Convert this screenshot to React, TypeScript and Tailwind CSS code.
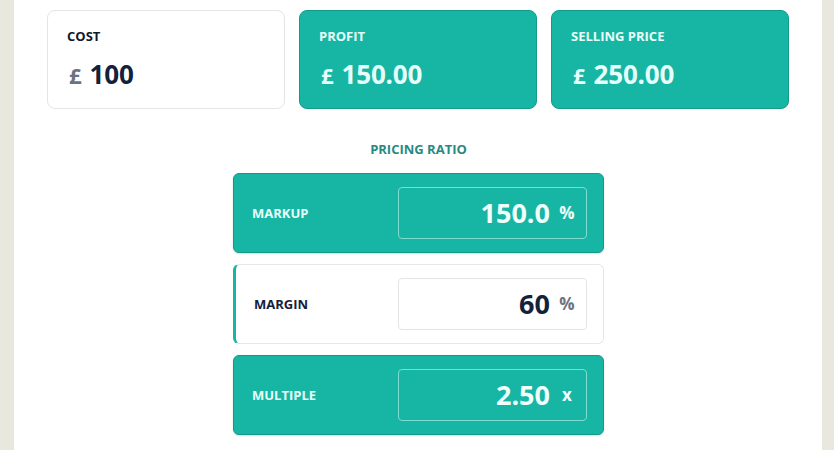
import React from "react";

const font = { fontFamily: '"Open Sans", "Liberation Sans", sans-serif' };

function Card({ label, value, active }: { label: string; value: string; active?: boolean }) {
  return (
    <div
      className={
        "w-[238px] h-[99px] rounded-[8px] border px-[19px] pt-[15px] " +
        (active ? "bg-[#17b5a4] border-[#139a8b]" : "bg-white border-[#e3e5e8]")
      }
    >
      <div className={"text-[13px] font-bold leading-[20px] " + (active ? "text-[#e6fffb]" : "text-[#111827]")}>{label}</div>
      <div className="mt-[12px] flex items-baseline gap-[8px] leading-[32px] pl-[2px]">
        <span className={"text-[22px] font-bold " + (active ? "text-[#e6fffb]" : "text-[#6b7280]")}>£</span>
        <span className={"text-[26px] font-bold tracking-[-0.2px] " + (active ? "text-[#e6fffb]" : "text-[#14213d]")}>{value}</span>
      </div>
    </div>
  );
}

function Row({ label, value, unit, active }: { label: string; value: string; unit: string; active?: boolean }) {
  return (
    <div
      className={
        "w-[371px] h-[80px] rounded-[6px] flex items-center justify-between pl-[18px] pr-[16px] " +
        (active
          ? "bg-[#17b5a4] border border-[#139a8b] shadow-[0_1px_2px_rgba(0,0,0,0.15)]"
          : "bg-white border border-[#e5e7eb] border-l-[3px] border-l-[#17b5a4]")
      }
    >
      <div className={"text-[13px] font-bold pt-[2px] " + (active ? "text-[#e6fffb]" : "text-[#14213d]")}>{label}</div>
      <div
        className={
          "w-[189px] h-[52px] rounded-[4px] border flex items-center justify-end pr-[11px] gap-[9px] " +
          (active ? "border-[#7fdcd0]" : "border-[#e3e5e8] bg-white")
        }
      >
        <span className={"text-[27px] font-bold leading-[34px] " + (active ? "text-[#f0fffc]" : "text-[#14213d]")}>{value}</span>
        <span
          className={
            "text-[17px] font-bold w-[16px] text-center " + (active ? "text-[#f0fffc]" : "text-[#6b7280]")
          }
        >
          {unit}
        </span>
      </div>
    </div>
  );
}

export default function App() {
  return (
    <div className="w-[834px] h-[450px] bg-[#e9e8df] px-[14px] pr-[12px] overflow-hidden" style={font}>
      <div className="bg-white h-full pt-[10px] pl-[33px] pr-[32px]">
        <div className="flex gap-[14px]">
          <Card label="COST" value="100" />
          <Card label="PROFIT" value="150.00" active />
          <Card label="SELLING PRICE" value="250.00" active />
        </div>
        <div className="mt-[30px] text-center text-[13px] font-bold text-[#268a82] leading-[20px]">PRICING RATIO</div>
        <div className="mt-[14px] flex flex-col items-center gap-[11px]">
          <Row label="MARKUP" value="150.0" unit="%" active />
          <Row label="MARGIN" value="60" unit="%" />
          <Row label="MULTIPLE" value="2.50" unit="x" active />
        </div>
      </div>
    </div>
  );
}
